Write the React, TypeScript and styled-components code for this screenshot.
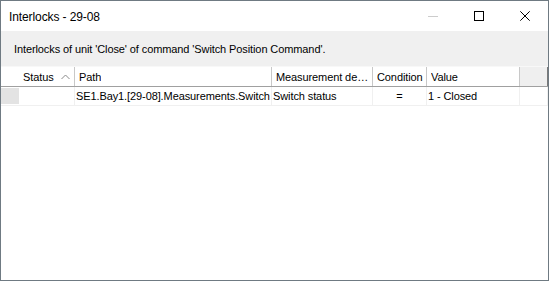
import styled, { createGlobalStyle } from 'styled-components';

const GlobalStyle = createGlobalStyle`
  html, body {
    margin: 0;
    padding: 0;
    background: #ffffff;
  }
  body {
    font-family: "Liberation Sans", Arial, sans-serif;
    font-size: 11px;
    letter-spacing: -0.1px;
    color: #000000;
  }
`;

const Window = styled.div`
  width: 549px;
  height: 281px;
  box-sizing: border-box;
  border: 1px solid #6f7a82;
  background: #ffffff;
  display: flex;
  flex-direction: column;
  overflow: hidden;
`;

const TitleBar = styled.div`
  height: 30px;
  display: flex;
  align-items: center;
  justify-content: space-between;
  background: #ffffff;
  flex-shrink: 0;
`;

const Title = styled.div`
  padding-left: 8px;
  font-size: 12px;
  letter-spacing: -0.1px;
  padding-top: 1px;
`;

const Controls = styled.div`
  display: flex;
  height: 100%;
`;

const CaptionButton = styled.div`
  width: 46px;
  height: 100%;
  display: flex;
  align-items: center;
  justify-content: center;
`;

const InfoBar = styled.div`
  height: 35px;
  background: #f0f0f0;
  display: flex;
  align-items: center;
  padding-left: 13px;
  flex-shrink: 0;
`;

const GridArea = styled.div`
  flex: 1;
  background: #ffffff;
  display: flex;
  flex-direction: column;
`;

const COLS = '18px 56px 197px 101px 54px 93px 1fr';

const HeaderRow = styled.div`
  display: grid;
  grid-template-columns: ${COLS};
  height: 21px;
  box-sizing: border-box;
  border-top: 1px solid #f8f8f8;
  border-bottom: 1px solid #a0a0a0;
  background: #ffffff;
`;

const HeaderCell = styled.div<{ $filler?: boolean }>`
  display: flex;
  align-items: center;
  justify-content: space-between;
  padding: 0 1px 0 4px;
  border-right: 1px solid ${(p) => (p.$filler ? '#7a7a7a' : '#c8c8c8')};
  background: ${(p) => (p.$filler ? '#efefef' : '#ffffff')};
  white-space: nowrap;
  overflow: hidden;
  min-width: 0;
`;

const HeaderLabel = styled.span`
  overflow: hidden;
  text-overflow: ellipsis;
`;

const CornerCell = styled.div`
  background: #ffffff;
`;

const DataRow = styled.div`
  display: grid;
  grid-template-columns: ${COLS};
  height: 19px;
  box-sizing: border-box;
  border-bottom: 1px solid #f0f0f0;
`;

const RowHeader = styled.div`
  background: #e3e3e3;
  margin: 1px 0;
`;

const Cell = styled.div<{ $center?: boolean }>`
  display: flex;
  align-items: center;
  justify-content: ${(p) => (p.$center ? 'center' : 'flex-start')};
  padding-left: ${(p) => (p.$center ? '0' : '1px')};
  border-right: 1px solid #f0f0f0;
  white-space: nowrap;
  overflow: hidden;
  min-width: 0;
`;

const ArrowIcon = styled.svg`
  margin-right: 3px;
  flex-shrink: 0;
`;

const SortArrow = () => (
  <ArrowIcon width="9" height="6" viewBox="0 0 9 6">
    <path d="M0.5 5 L4.5 1 L8.5 5" fill="none" stroke="#8a8a8a" strokeWidth="1" />
  </ArrowIcon>
);

export default function App() {
  return (
    <>
      <GlobalStyle />
      <Window>
        <TitleBar>
          <Title>Interlocks - 29-08</Title>
          <Controls>
            <CaptionButton>
              <svg width="10" height="10" viewBox="0 0 10 10">
                <path d="M0 5.5 H10" stroke="#cccccc" strokeWidth="1" />
              </svg>
            </CaptionButton>
            <CaptionButton>
              <svg width="10" height="10" viewBox="0 0 10 10">
                <rect x="0.5" y="0.5" width="9" height="9" fill="none" stroke="#000000" strokeWidth="1" />
              </svg>
            </CaptionButton>
            <CaptionButton>
              <svg width="10" height="10" viewBox="0 0 10 10">
                <path d="M0.3 0.3 L9.7 9.7 M9.7 0.3 L0.3 9.7" stroke="#000000" strokeWidth="1" />
              </svg>
            </CaptionButton>
          </Controls>
        </TitleBar>
        <InfoBar>Interlocks of unit 'Close' of command 'Switch Position Command'.</InfoBar>
        <GridArea>
          <HeaderRow>
            <CornerCell />
            <HeaderCell>
              <HeaderLabel>Status</HeaderLabel>
              <SortArrow />
            </HeaderCell>
            <HeaderCell>
              <HeaderLabel>Path</HeaderLabel>
            </HeaderCell>
            <HeaderCell>
              <HeaderLabel>Measurement description</HeaderLabel>
            </HeaderCell>
            <HeaderCell>
              <HeaderLabel>Condition</HeaderLabel>
            </HeaderCell>
            <HeaderCell>
              <HeaderLabel>Value</HeaderLabel>
            </HeaderCell>
            <HeaderCell $filler />
          </HeaderRow>
          <DataRow>
            <RowHeader />
            <Cell />
            <Cell>SE1.Bay1.[29-08].Measurements.Switch</Cell>
            <Cell>Switch status</Cell>
            <Cell $center>=</Cell>
            <Cell>1 - Closed</Cell>
            <Cell />
          </DataRow>
        </GridArea>
      </Window>
    </>
  );
}
